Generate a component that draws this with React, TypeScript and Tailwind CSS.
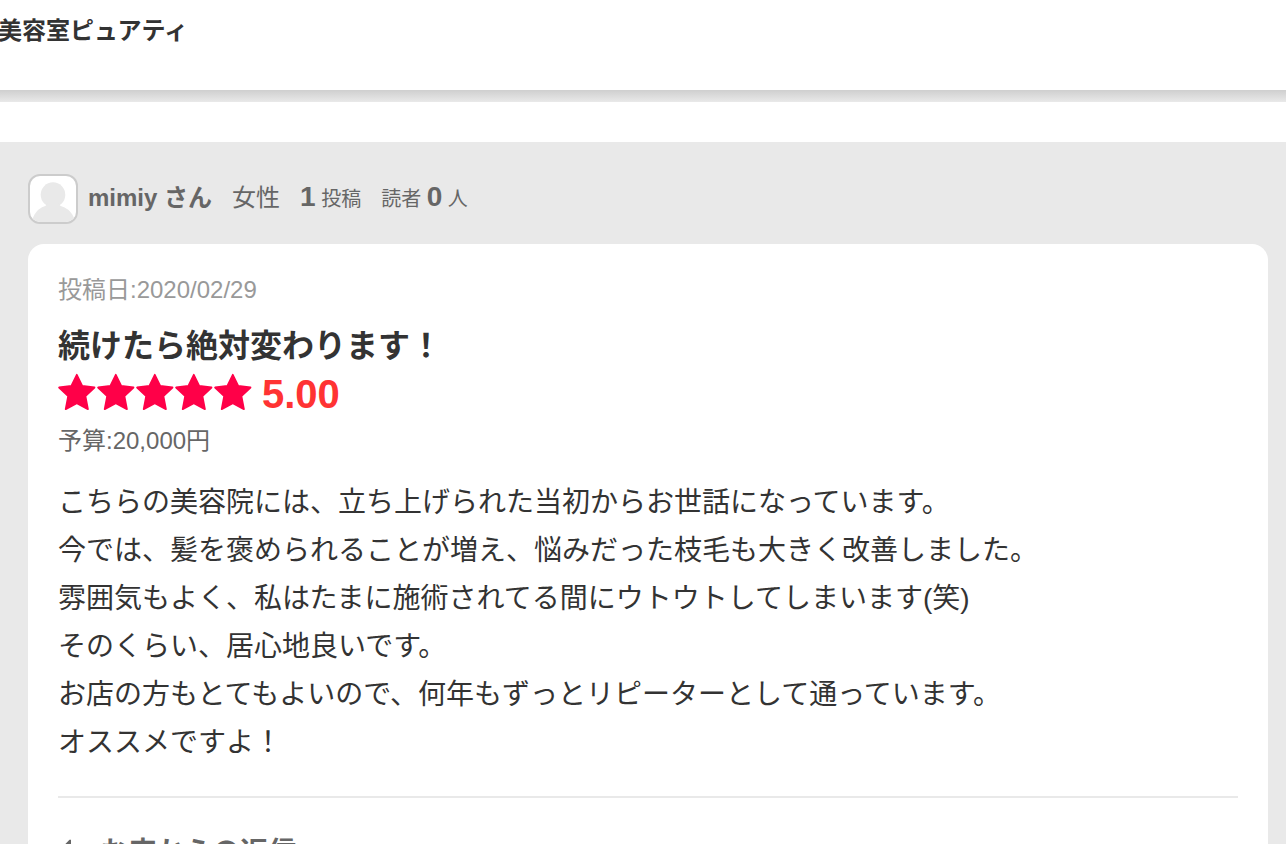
const bodyLines = [
  'こちらの美容院には、立ち上げられた当初からお世話になっています。',
  '今では、髪を褒められることが増え、悩みだった枝毛も大きく改善しました。',
  '雰囲気もよく、私はたまに施術されてる間にウトウトしてしまいます(笑)',
  'そのくらい、居心地良いです。',
  'お店の方もとてもよいので、何年もずっとリピーターとして通っています。',
  'オススメですよ！',
];

function Avatar() {
  return (
    <svg viewBox="0 0 46 46" className="size-full" role="img" aria-label="mimiy">
      <g fill="#e9e9e9">
        <ellipse cx="23" cy="18.7" rx="12.3" ry="12.4" />
        <path d="M17 26h12c-.5 2 .5 3.500 3 4.500 6 2 10 6 12.500 12.500L45 46H1l1.500-3C5 36.500 8.500 32.500 14 30.500c2.500-1 3.500-2.500 3-4.500z" />
      </g>
    </svg>
  );
}

function Star() {
  return (
    <svg viewBox="0 0 39 38" className="h-[38px] w-[39px]" aria-hidden="true">
      <path
        d="M18.8 1.800L24.2 13l12.300 1.500-9.100 8.700 2.500 12.900-11.100-6-11.100 6 2.500-12.900-9.100-8.700L13.400 13z"
        fill="#ff0048"
        stroke="#ff0048"
        strokeWidth="1.800"
        strokeLinejoin="round"
      />
    </svg>
  );
}

function ReplyIcon() {
  return (
    <svg viewBox="0 0 32 28" className="h-7 w-8" aria-hidden="true">
      <path
        d="M13 .8v6.200h5c8 0 12 5 11 15-2.500-5-5.500-6.500-11-6.500h-5v6.500L1 11.500 11.500 .8z"
        fill="currentColor"
      />
    </svg>
  );
}

export default function App() {
  return (
    <div className="min-h-screen overflow-x-hidden bg-[#e9e9e9] font-['Liberation_Sans','Noto_Sans_CJK_JP',sans-serif] text-[#333]">
      <header className="h-[90px] bg-white pt-[13px]">
        <h1 className="-ml-0.5 text-2xl leading-9 font-bold">美容室ピュアティ</h1>
      </header>
      <div className="h-3 bg-linear-to-b from-[#cfcfcf] to-[#e9e9e9]" />
      <div className="h-10 bg-white" />
      <main className="pt-8 pr-[18px] pl-7">
        <div className="flex h-[50px] items-center text-[#666]">
          <div className="size-[50px] overflow-hidden rounded-xl border-2 border-[#ccc] bg-white">
            <Avatar />
          </div>
          <div className="ml-2.5 flex items-baseline pb-0.5 leading-9">
            <a href="#mimiy" className="text-2xl leading-9 font-bold">mimiy さん</a>
            <span className="ml-5 text-2xl leading-9">女性</span>
            <span className="ml-5 text-xl leading-9">
              <b className="text-[28px]">1</b> 投稿
            </span>
            <span className="ml-5 text-xl leading-9">
              読者 <b className="text-[28px]">0</b> 人
            </span>
          </div>
        </div>
        <article className="mt-5 rounded-t-2xl bg-white px-[30px] pt-7 pb-10">
          <p className="text-2xl leading-9 text-[#999]">投稿日:2020/02/29</p>
          <h2 className="mt-3.5 text-[32px] leading-[48px] font-bold">続けたら絶対変わります！</h2>
          <div className="flex h-12 items-center">
            <div className="flex pb-1">
              <Star />
              <Star />
              <Star />
              <Star />
              <Star />
            </div>
            <span className="ml-[9px] text-[40px] leading-[48px] font-bold text-[#f33]">5.00</span>
          </div>
          <p className="mt-[5px] text-2xl leading-9 text-[#666]">予算:20,000円</p>
          <div className="mt-5 text-[28px] leading-[48px]">
            {bodyLines.map((line) => (
              <p key={line}>{line}</p>
            ))}
          </div>
          <section className="mt-[29px] border-t-2 border-[#e9e9e9] pt-[35px] text-[#666]">
            <h3 className="flex items-center gap-2.5 text-[28px] leading-10 font-bold">
              <ReplyIcon />
              お店からの返信
            </h3>
          </section>
        </article>
      </main>
    </div>
  );
}
